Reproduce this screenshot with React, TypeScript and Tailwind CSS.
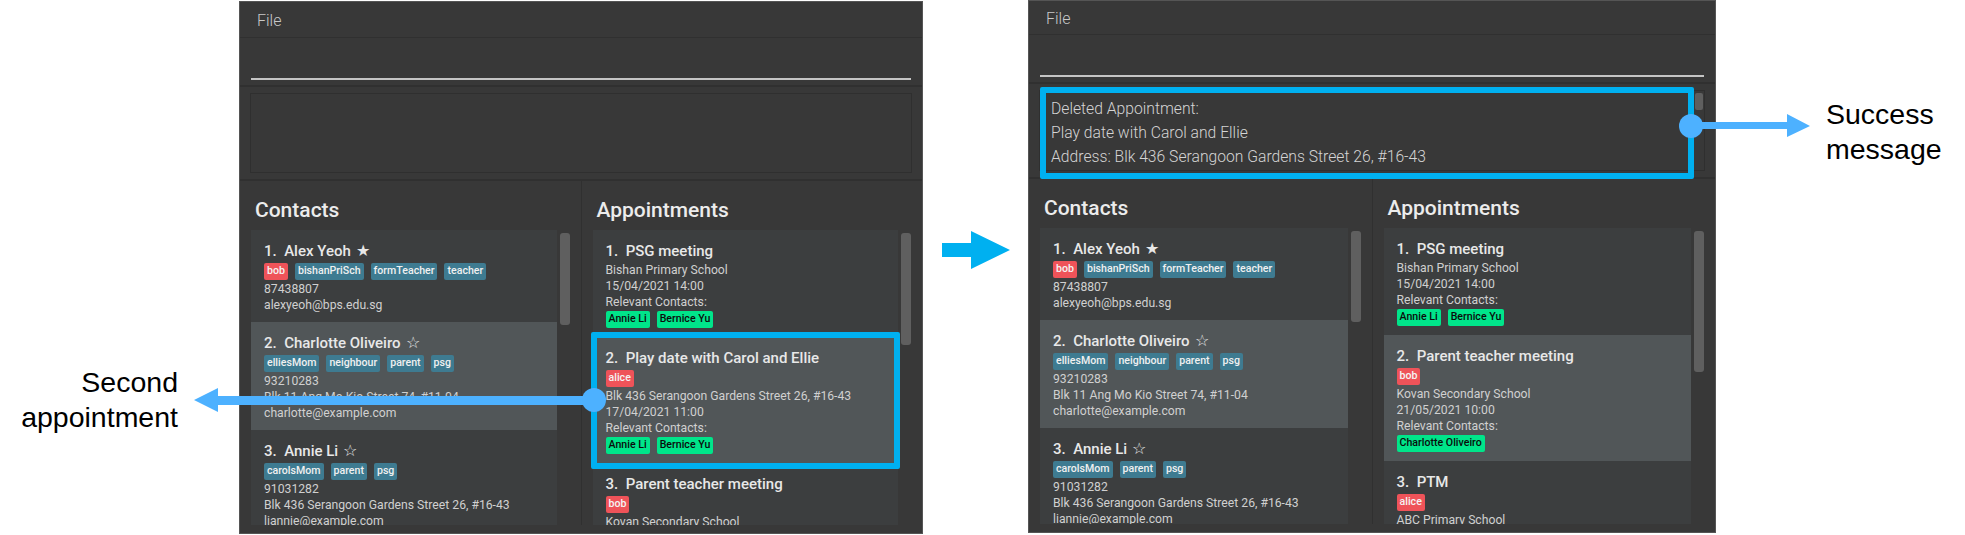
import React from "react";

type Contact = { name: string; star: string; tags: string[]; red?: string; lines: string[] };
type Appt = { title: string; red?: string; lines: string[]; people: string[] };

const contacts: Contact[] = [
  {
    name: "Alex Yeoh",
    star: "★",
    red: "bob",
    tags: ["bishanPriSch", "formTeacher", "teacher"],
    lines: ["87438807", "alexyeoh@bps.edu.sg"],
  },
  {
    name: "Charlotte Oliveiro",
    star: "☆",
    tags: ["elliesMom", "neighbour", "parent", "psg"],
    lines: ["93210283", "Blk 11 Ang Mo Kio Street 74, #11-04", "charlotte@example.com"],
  },
  {
    name: "Annie Li",
    star: "☆",
    tags: ["carolsMom", "parent", "psg"],
    lines: ["91031282", "Blk 436 Serangoon Gardens Street 26, #16-43", "liannie@example.com"],
  },
];

const psg: Appt = {
  title: "PSG meeting",
  lines: ["Bishan Primary School", "15/04/2021 14:00", "Relevant Contacts:"],
  people: ["Annie Li", "Bernice Yu"],
};

const leftAppts: Appt[] = [
  psg,
  {
    title: "Play date with Carol and Ellie",
    red: "alice",
    lines: ["Blk 436 Serangoon Gardens Street 26, #16-43", "17/04/2021 11:00", "Relevant Contacts:"],
    people: ["Annie Li", "Bernice Yu"],
  },
  {
    title: "Parent teacher meeting",
    red: "bob",
    lines: ["Kovan Secondary School", "21/05/2021 10:00", "Relevant Contacts:"],
    people: ["Charlotte Oliveiro"],
  },
];

const rightAppts: Appt[] = [
  psg,
  leftAppts[2],
  {
    title: "PTM",
    red: "alice",
    lines: ["ABC Primary School", "30/06/2021 09:00", "Relevant Contacts:"],
    people: ["Annie Li"],
  },
];

function Tag({ label, kind }: { label: string; kind: "red" | "blue" | "green" }) {
  const colors = {
    red: "bg-[#ef5359] text-[#f4f4f4]",
    blue: "bg-[#3e7b91] text-[#f0f0f0]",
    green: "bg-[#00e58a] text-[#0b0b0b]",
  };
  return (
    <span className={`flex h-[17px] items-center rounded-[2px] px-[3px] text-[10.6px] font-medium leading-none ${colors[kind]}`}>
      {label}
    </span>
  );
}

function Card({ index, children }: { index: number; children: React.ReactNode }) {
  return (
    <div className={`pb-[9px] pl-[13px] pt-[11px] ${index % 2 === 1 ? "bg-[#515658]" : "bg-[#3c3e3f]"}`}>
      {children}
    </div>
  );
}

function Title({ index, text, star }: { index: number; text: string; star?: string }) {
  return (
    <div className="-mt-[1px] mb-[1px] flex h-[22px] items-center whitespace-pre text-[15px] font-medium leading-[22px] text-[#e8e8e8]">
      {index + 1}.  {text}
      {star && <span className="ml-[5px] text-[16px]">{star}</span>}
    </div>
  );
}

function Lines({ lines }: { lines: string[] }) {
  return (
    <>
      {lines.map((l) => (
        <div key={l} className="h-[16px] whitespace-nowrap text-[12.2px] leading-[16px] text-[#d0d0d0]">
          {l}
        </div>
      ))}
    </>
  );
}

function ContactCard({ c, index }: { c: Contact; index: number }) {
  return (
    <Card index={index}>
      <Title index={index} text={c.name} star={c.star} />
      <div className="mb-[1px] flex gap-[7px]">
        {c.red && <Tag label={c.red} kind="red" />}
        {c.tags.map((t) => (
          <Tag key={t} label={t} kind="blue" />
        ))}
      </div>
      <Lines lines={c.lines} />
    </Card>
  );
}

function ApptCard({ a, index }: { a: Appt; index: number }) {
  return (
    <Card index={index}>
      <Title index={index} text={a.title} />
      {a.red ? (
        <div className="mb-[1px] flex">
          <Tag label={a.red} kind="red" />
        </div>
      ) : (
        <div className="-mt-[1px]" />
      )}
      <Lines lines={a.lines} />
      <div className="mt-[1px] flex gap-[7px]">
        {a.people.map((p) => (
          <Tag key={p} label={p} kind="green" />
        ))}
      </div>
    </Card>
  );
}

function Pane({
  title,
  thumb,
  divider,
  children,
}: {
  title: string;
  thumb: string;
  divider?: boolean;
  children: React.ReactNode;
}) {
  return (
    <div className={`flex min-w-0 flex-1 flex-col px-[11px] ${divider ? "border-r border-[#303030]" : ""}`}>
      <div className="flex h-[49px] items-center pl-[4px] pt-[11px] text-[21px] font-medium text-[#ececec]">{title}</div>
      <div className="flex min-h-0 flex-1 gap-[3px]">
        <div className="min-w-0 flex-1 overflow-hidden bg-[#3c3e3f]">{children}</div>
        <div className="w-[10px] shrink-0 pt-[3px]">
          <div className={`rounded-[3px] bg-[#5f5f5f] ${thumb}`} />
        </div>
      </div>
    </div>
  );
}

function AppWindow({
  className,
  menu,
  result,
  appts,
  thumbs,
  message,
}: {
  className: string;
  menu: string;
  result: string;
  appts: Appt[];
  thumbs: string[];
  message?: string[];
}) {
  return (
    <div className={`absolute flex h-[533px] flex-col border border-[#555] bg-[#383838] ${className}`}>
      <div className={`flex items-center border-b border-[#303030] pl-[17px] pt-[2px] text-[16px] font-light text-[#c8c8c8] ${menu}`}>File</div>
      <div className="flex h-[49px] items-end border-b-2 border-[#303030] px-[11px] pb-[5px]">
        <div className="h-[2px] w-full bg-[#c4c4c4]" />
      </div>
      <div className={`border-b-2 border-[#303030] px-[10px] py-[6px] ${result}`}>
        <div className="relative h-full border border-[#2f2f2f] pl-[11px] pt-[6px] text-[15.7px] font-light leading-[24px] text-[#d4d4d4]">
          {message?.map((m) => (
            <div key={m}>{m}</div>
          ))}
          {message && <div className="absolute right-[1px] top-[2px] h-[17px] w-[8px] rounded-[2px] bg-[#5f5f5f]" />}
        </div>
      </div>
      <div className="flex min-h-0 flex-1 pb-[8px]">
        <Pane title="Contacts" thumb={thumbs[0]} divider>
          {contacts.map((c, i) => (
            <ContactCard key={c.name} c={c} index={i} />
          ))}
        </Pane>
        <Pane title="Appointments" thumb={thumbs[1]}>
          {appts.map((a, i) => (
            <ApptCard key={a.title} a={a} index={i} />
          ))}
        </Pane>
      </div>
    </div>
  );
}

function Label({ className, children }: { className: string; children: React.ReactNode }) {
  return (
    <div className={`absolute font-['Liberation_Sans',sans-serif] text-[28.5px] leading-[35px] text-black ${className}`}>
      {children}
    </div>
  );
}

export default function App() {
  return (
    <div className="relative h-[535px] w-[1965px] overflow-hidden bg-white font-['Roboto',sans-serif]">
      <AppWindow
        className="left-[239px] top-[1px] w-[684px]"
        menu="h-[36px]"
        result="h-[94px]"
        appts={leftAppts}
        thumbs={["h-[92px]", "h-[112px]"]}
      />
      <AppWindow
        className="left-[1028px] top-0 w-[688px]"
        menu="h-[34px]"
        result="h-[95px]"
        appts={rightAppts}
        thumbs={["h-[91px]", "h-[141px]"]}
        message={[
          "Deleted Appointment:",
          "Play date with Carol and Ellie",
          "Address: Blk 436 Serangoon Gardens Street 26, #16-43",
        ]}
      />

      {/* annotation boxes */}
      <div className="absolute left-[591px] top-[332px] h-[137px] w-[309px] rounded-[2px] border-[6px] border-[#00b0f0]" />
      <div className="absolute left-[1040px] top-[87px] h-[92px] w-[654px] rounded-[2px] border-[6px] border-[#00b0f0]" />

      <svg className="absolute left-0 top-0" width="1965" height="535" fill="none">
        <path d="M194 400 L218 388 V396 H594 V405 H218 V412 Z" fill="#4db1ff" />
        <circle cx="594" cy="400" r="12" fill="#4db1ff" />
        <circle cx="1691" cy="126" r="12" fill="#4db1ff" />
        <path d="M1691 122 H1787 V114 L1810 126 L1787 137 V129 H1691 Z" fill="#4db1ff" />
        <path d="M942 243 H971 V231 L1010 250 L971 269 V257 H942 Z" fill="#00b0f0" />
      </svg>

      <Label className="right-[1787px] top-[365px] text-right">
        Second
        <br />
        appointment
      </Label>
      <Label className="left-[1826px] top-[97px]">
        Success
        <br />
        message
      </Label>
    </div>
  );
}
